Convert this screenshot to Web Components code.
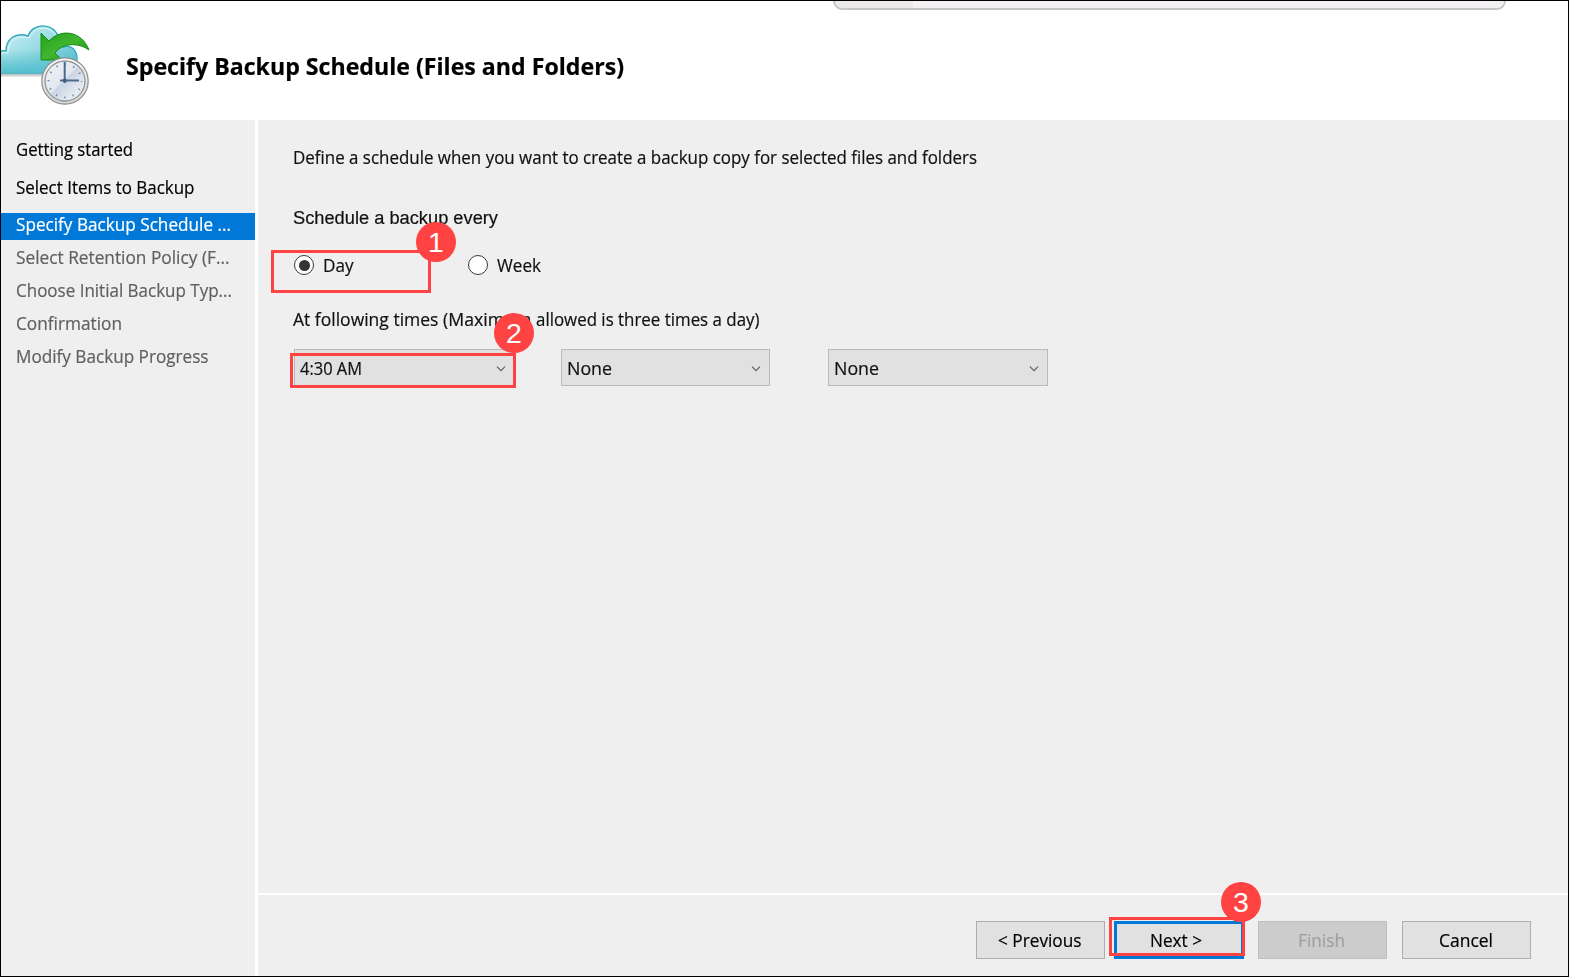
<!DOCTYPE html>
<html lang="en"><head><meta charset="utf-8"><title>Backup Schedule Wizard</title>
<style>html,body{margin:0;height:100%;overflow:hidden}body{font-family:"Open Sans","Noto Sans",sans-serif;font-size:18px;color:#111}</style></head>
<body><backup-wizard></backup-wizard>
<script>
const define=(name,html,setup)=>customElements.define(name,class extends HTMLElement{
  constructor(){super();this.attachShadow({mode:'open'}).innerHTML=html;}
  connectedCallback(){setup&&setup(this,this.shadowRoot);}
});

// A single line of text condensed to the interface font's width.
define('ui-text','<style>:host{display:block;height:24px;line-height:24px;white-space:nowrap;-webkit-text-stroke:.2px currentColor}span{display:inline-block;transform-origin:0 0}</style><span><slot></slot></span>',(el,root)=>{
  const w=+el.getAttribute('w'),s=root.querySelector('span');
  el.style.width=w+'px';
  const fit=()=>{s.style.transform='none';const n=s.getBoundingClientRect().width;if(n)s.style.transform='scaleX('+w/n+')';};
  fit();document.fonts.ready.then(fit);
});

define('cloud-clock-icon',`<style>:host{display:block;width:95px;height:90px}svg{display:block}</style>
<svg width="95" height="90" viewBox="0 20 95 90"><defs>
<linearGradient id="c" x1="0" y1="0" x2="1" y2="1"><stop offset="0" stop-color="#d5f1f4"/><stop offset=".45" stop-color="#9ddde5"/><stop offset="1" stop-color="#42b6c7"/></linearGradient>
<linearGradient id="b" x1="0" y1="0" x2="0" y2="1"><stop offset=".5" stop-color="#64c6d3" stop-opacity="0"/><stop offset="1" stop-color="#55bfce"/></linearGradient>
<linearGradient id="g" x1="0" y1="0" x2="1" y2="1"><stop offset="0" stop-color="#20a51d"/><stop offset=".5" stop-color="#42b52d"/><stop offset="1" stop-color="#129510"/></linearGradient>
<linearGradient id="r" x1="0" y1="0" x2="0" y2="1"><stop offset="0" stop-color="#fafafa"/><stop offset="1" stop-color="#d2d3d2"/></linearGradient>
<linearGradient id="f" x1="0" y1="0" x2="1" y2="1"><stop offset="0" stop-color="#f1f4f8"/><stop offset=".46" stop-color="#e2e8f0"/><stop offset=".5" stop-color="#cbd6e4"/><stop offset="1" stop-color="#f8fafb"/></linearGradient>
<filter id="s" x="-10%" y="-50%" width="120%" height="250%"><feGaussianBlur stdDeviation="1"/></filter></defs>
<path d="M0 73H66V76H0Z" fill="#8a9699" opacity=".65" filter="url(#s)"/>
<path d="M-3 53Q2 50 6 51C6 39 15 32 28 36C32 23 53 22 58 36L63 47C71 44 77 50 77 59C77 68 72 73 64 73H-3Z" fill="url(#c)" stroke="#33a8bc" stroke-width="1.4"/>
<path d="M-3 53Q2 50 6 51C6 39 15 32 28 36C32 23 53 22 58 36L63 47C71 44 77 50 77 59C77 68 72 73 64 73H-3Z" fill="url(#b)"/>
<path d="M1 54Q5 51 8 53C8 40 17 35 29 38C33 27 49 24 56 36" fill="none" stroke="#e4f8fa" stroke-width="1"/>
<path d="M41 33L49 41C61 28 82 31 89 50C78 42 62 43 55 53L62 60H41Z" fill="url(#g)" stroke="#168d18" stroke-width="1"/>
<circle cx="65" cy="81" r="23.2" fill="url(#r)" stroke="#8b8e8e" stroke-width="1.2"/>
<circle cx="65" cy="81" r="20" fill="url(#f)" stroke="#92969a" stroke-width="1.3"/>
<circle cx="65" cy="81" r="16.5" fill="none" stroke="#6b87a8" stroke-width="2" stroke-dasharray="1.3 7.34" stroke-dashoffset=".65"/>
<path d="M64.7 62V83M60 80.5H79" stroke="#4a6b8c" stroke-width="2"/><circle cx="64.7" cy="80.5" r="2" fill="#405f7e"/></svg>`);

define('wizard-header',`<style>:host{display:flex;height:120px;box-sizing:border-box;padding:20px 0 0;background:#fff;position:relative}
cloud-clock-icon{margin-right:31px}ui-text{font-size:22.5px;font-weight:700;color:#000;margin-top:35px}
.remote-bar{position:absolute;left:833px;top:-8px;width:673px;height:18px;box-sizing:border-box;border:2px solid #c6c6c6;border-radius:9px;background:linear-gradient(90deg,#ebe9e9 78px,#f2f0f2 78px)}</style>
<cloud-clock-icon></cloud-clock-icon><ui-text w="498">Specify Backup Schedule (Files and Folders)</ui-text><div class="remote-bar"></div>`);

define('step-list',`<style>:host{display:flex;flex-direction:column;width:256px;box-sizing:border-box;padding-top:17px;background:#efefef;color:#000}
div{height:33px;padding-left:15.5px;box-sizing:border-box;color:#606060}.done{height:37.5px;color:#000}.active{color:#fff;background:#0078d7;height:27px;margin:1px 0 5px 0}.active ui-text{margin-top:-1px}</style>
<div class="done"><ui-text w="117">Getting started</ui-text></div><div class="done"><ui-text w="178.5">Select Items to Backup</ui-text></div>
<div class="active"><ui-text w="215">Specify Backup Schedule ...</ui-text></div><div><ui-text w="213.5">Select Retention Policy (F...</ui-text></div><div><ui-text w="216">Choose Initial Backup Typ...</ui-text></div><div><ui-text w="106">Confirmation</ui-text></div><div><ui-text w="192.5">Modify Backup Progress</ui-text></div>`);

define('radio-option',`<style>:host{display:flex;align-items:center;height:24px}i{box-sizing:border-box;width:20px;height:20px;border:1.6px solid #3c3c3c;border-radius:50%;background:#fff;display:grid;place-items:center;margin-right:9px}:host([checked]) i::after{content:"";width:11px;height:11px;border-radius:50%;background:#333}</style><i></i><slot></slot>`);

define('time-select',`<style>:host{display:flex;box-sizing:border-box;height:37px;border:1px solid #bababa;background:#e1e1e1;padding:6px 8.5px 0 5px;justify-content:space-between}svg{margin-top:8.5px}</style><slot></slot><svg width="10" height="8" viewBox="0 0 10 8"><path d="M1 1.7L5 5.7L9 1.7" fill="none" stroke="#626262" stroke-width="1.2"/></svg>`);

define('schedule-form',`<style>:host{display:block;flex:1;box-sizing:border-box;padding:25px 0 0 35px;background:#efefef}
.every{font-family:"Liberation Sans",Arial,sans-serif;margin-top:37px}.radios{display:flex;margin-top:23px}.radios radio-option:first-child{width:174px;margin-left:1px}
.at{display:flex;margin-top:30px}.times{display:flex;margin-top:18px}.times time-select+time-select{margin-left:58px}</style>
<ui-text w="684">Define a schedule when you want to create a backup copy for selected files and folders</ui-text>
<ui-text class="every" w="205">Schedule a backup every</ui-text>
<div class="radios"><radio-option checked><ui-text w="30.5">Day</ui-text></radio-option><radio-option><ui-text w="44">Week</ui-text></radio-option></div>
<div class="at"><ui-text w="150">At following times&nbsp;</ui-text><ui-text w="93">(Maximum&nbsp;</ui-text><ui-text w="223.5">allowed is three times a day)</ui-text></div>
<div class="times"><time-select style="width:221px;margin-left:1px;margin-right:-12px"><ui-text w="62">4:30 AM</ui-text></time-select><time-select style="width:209px"><ui-text w="45">None</ui-text></time-select><time-select style="width:220px"><ui-text w="45">None</ui-text></time-select></div>`);

define('wizard-button',`<style>:host{display:flex;box-sizing:border-box;width:129px;height:38px;border:1.5px solid #adadad;background:#e1e1e1;justify-content:center;padding-top:6px;color:#000}:host([primary]){border:3px solid #0078d7;width:130px;padding:4px 4px 0 0}:host([disabled]){background:#ccc;border-color:#bfbfbf;color:#a0a0a0}</style><slot></slot>`);

define('wizard-footer',`<style>:host{display:flex;height:84px;box-sizing:border-box;border-top:2px solid #fff;padding:26px 38px 0 0;background:#efefef;justify-content:flex-end}wizard-button+wizard-button{margin-left:15px}wizard-button.next{margin-left:9px!important}.next+wizard-button{margin-left:14px!important}ui-text{position:relative;left:-1px}</style>
<wizard-button><ui-text w="83.5">&lt; Previous</ui-text></wizard-button><wizard-button primary class="next"><ui-text w="52">Next &gt;</ui-text></wizard-button><wizard-button disabled><ui-text w="47">Finish</ui-text></wizard-button><wizard-button><ui-text w="54">Cancel</ui-text></wizard-button>`);

// Numbered callout drawn over the controls.
define('step-callout',`<style>:host{position:absolute;box-sizing:border-box;border:3px solid #ff4343}b{position:absolute;width:40px;height:40px;border-radius:50%;background:#ff4343;color:#fff;font:400 28.5px/41px "Liberation Sans",Arial,sans-serif;text-align:center;left:var(--bx);top:var(--by)}</style><b><slot></slot></b>`);

define('backup-wizard',`<style>:host{display:flex;flex-direction:column;width:1569px;height:977px;position:relative;overflow:hidden}
.body{display:flex;flex:1}.main{display:flex;flex-direction:column;flex:1;border-left:3px solid #fff;margin-left:-1px}.frame{position:absolute;inset:0;border:1px solid #000;pointer-events:none}</style>
<wizard-header></wizard-header><div class="body"><step-list></step-list><div class="main"><schedule-form></schedule-form><wizard-footer></wizard-footer></div></div>
<step-callout style="left:271px;top:250px;width:160px;height:43px;--bx:142px;--by:-31px">1</step-callout>
<step-callout style="left:290px;top:353px;width:226px;height:35px;--bx:201px;--by:-43px">2</step-callout>
<step-callout style="left:1109px;top:917px;width:136px;height:39px;--bx:109px;--by:-38px">3</step-callout>
<div class="frame"></div>`);
</script></body></html>
